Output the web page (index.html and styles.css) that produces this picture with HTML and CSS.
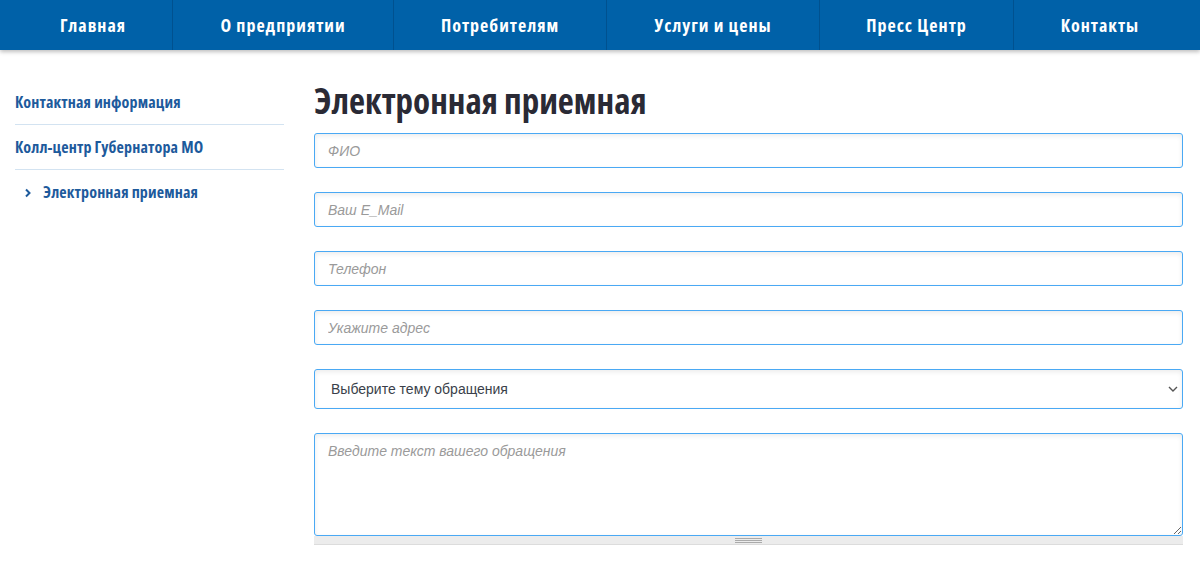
FILE: index.html
```html
<!DOCTYPE html>
<html lang="ru">
<head>
<meta charset="utf-8">
<title>Электронная приемная</title>
<link rel="stylesheet" href="styles.css">
</head>
<body>
<nav class="topnav">
  <a class="topnav__item topnav__item--first" href="#">Главная</a>
  <a class="topnav__item" href="#">О предприятии</a>
  <a class="topnav__item" href="#">Потребителям</a>
  <a class="topnav__item" href="#">Услуги и цены</a>
  <a class="topnav__item" href="#">Пресс Центр</a>
  <a class="topnav__item topnav__item--last" href="#">Контакты</a>
</nav>
<div class="page">
  <aside class="sidebar">
    <a class="sidebar__link" href="#">Контактная информация</a>
    <a class="sidebar__link" href="#">Колл-центр Губернатора МО</a>
    <a class="sidebar__link sidebar__link--active" href="#">
      <svg class="sidebar__chevron" width="8" height="10" viewBox="0 0 8 10"><path d="M2 1.5 L5.5 5 L2 8.5" fill="none" stroke="#1d5a9c" stroke-width="2"/></svg>
      Электронная приемная
    </a>
  </aside>
  <main class="main">
    <h1 class="title">Электронная приемная</h1>
    <form class="form">
      <input class="field" type="text" placeholder="ФИО">
      <input class="field" type="text" placeholder="Ваш E_Mail">
      <input class="field" type="text" placeholder="Телефон">
      <input class="field" type="text" placeholder="Укажите адрес">
      <div class="select-wrap">
        <select class="field field--select">
          <option>Выберите тему обращения</option>
        </select>
        <svg class="select-wrap__arrow" width="10" height="6" viewBox="0 0 10 6"><path d="M1 1 L5 5 L9 1" fill="none" stroke="#555" stroke-width="1.4"/></svg>
      </div>
      <div class="textarea-wrap">
        <textarea class="field field--textarea" placeholder="Введите текст вашего обращения"></textarea>
        <div class="grip"><span class="grip__lines"></span></div>
      </div>
    </form>
  </main>
</div>
</body>
</html>
```
FILE: styles.css
```css
* { box-sizing: border-box; }
html, body { margin: 0; padding: 0; background: #fff; }
body { font-family: "Open Sans", "Liberation Sans", sans-serif; }

.topnav {
  display: grid;
  grid-template-columns: 172px 221px 213px 213px 194px 1fr;
  height: 50px;
  background: #0061a8;
  box-shadow: 0 2px 4px rgba(0,0,0,0.25);
  position: relative;
  z-index: 1;
}
.topnav__item {
  display: flex;
  align-items: center;
  justify-content: center;
  color: #fff;
  text-decoration: none;
  font-family: "Open Sans", sans-serif;
  font-stretch: 75%;
  font-weight: 700;
  font-size: 18px;
  letter-spacing: 1px;
  border-left: 1px solid #00518f;
  padding-bottom: 1px;
}
.topnav__item--first { border-left: none; padding-left: 14px; }
.topnav__item--last { padding-right: 14px; }

.page {
  display: flex;
  padding: 30px 17px 0 15px;
  gap: 30px;
}
.sidebar {
  width: 269px;
  flex: none;
  display: flex;
  flex-direction: column;
}
.sidebar__link {
  display: flex;
  align-items: center;
  padding: 12px 0 11px;
  line-height: 21px;
  border-bottom: 1px solid #d3e3f1;
  color: #1d5a9c;
  text-decoration: none;
  font-family: "Open Sans", sans-serif;
  font-stretch: 75%;
  font-weight: 700;
  font-size: 16px;
  letter-spacing: 0.15px;
}
.sidebar__link--active {
  border-bottom: none;
  padding-left: 9px;
}
.sidebar__chevron { margin-right: 11px; }

.main { flex: 1; min-width: 0; }
.title {
  margin: 0 0 11px;
  line-height: 42px;
  font-family: "Open Sans", sans-serif;
  font-stretch: 75%;
  font-weight: 700;
  font-size: 35px;
  color: #2a2a35;
}
.form { display: flex; flex-direction: column; gap: 24px; }
.field {
  display: block;
  width: 100%;
  height: 35px;
  margin: 0;
  padding: 0 13px;
  border: 1px solid #4aa9f4;
  border-radius: 3px;
  background: #fff;
  box-shadow: inset 0 2px 5px rgba(0,0,0,0.08);
  font-family: "Liberation Sans", Arial, sans-serif;
  font-size: 14px;
  color: #3a3f4a;
  outline: none;
}
.field::placeholder { color: #9a9a9a; font-style: italic; }
.select-wrap { position: relative; }
.field--select {
  height: 40px;
  padding-left: 16px;
  appearance: none;
  -webkit-appearance: none;
}
.select-wrap__arrow {
  position: absolute;
  right: 5px;
  top: 17px;
  pointer-events: none;
}
.textarea-wrap { display: flex; flex-direction: column; }
.field--textarea {
  height: 103px;
  padding: 8px 13px;
  resize: vertical;
  line-height: 18px;
}
.grip {
  height: 9px;
  background: #ececec;
  border-bottom: 1px solid #dcdcdc;
  display: flex;
  justify-content: center;
  padding-top: 2px;
}
.grip__lines {
  width: 27px;
  height: 5px;
  background: linear-gradient(#aaa 0 1px, transparent 1px 2px, #aaa 2px 3px, transparent 3px 4px, #aaa 4px 5px);
}
```
